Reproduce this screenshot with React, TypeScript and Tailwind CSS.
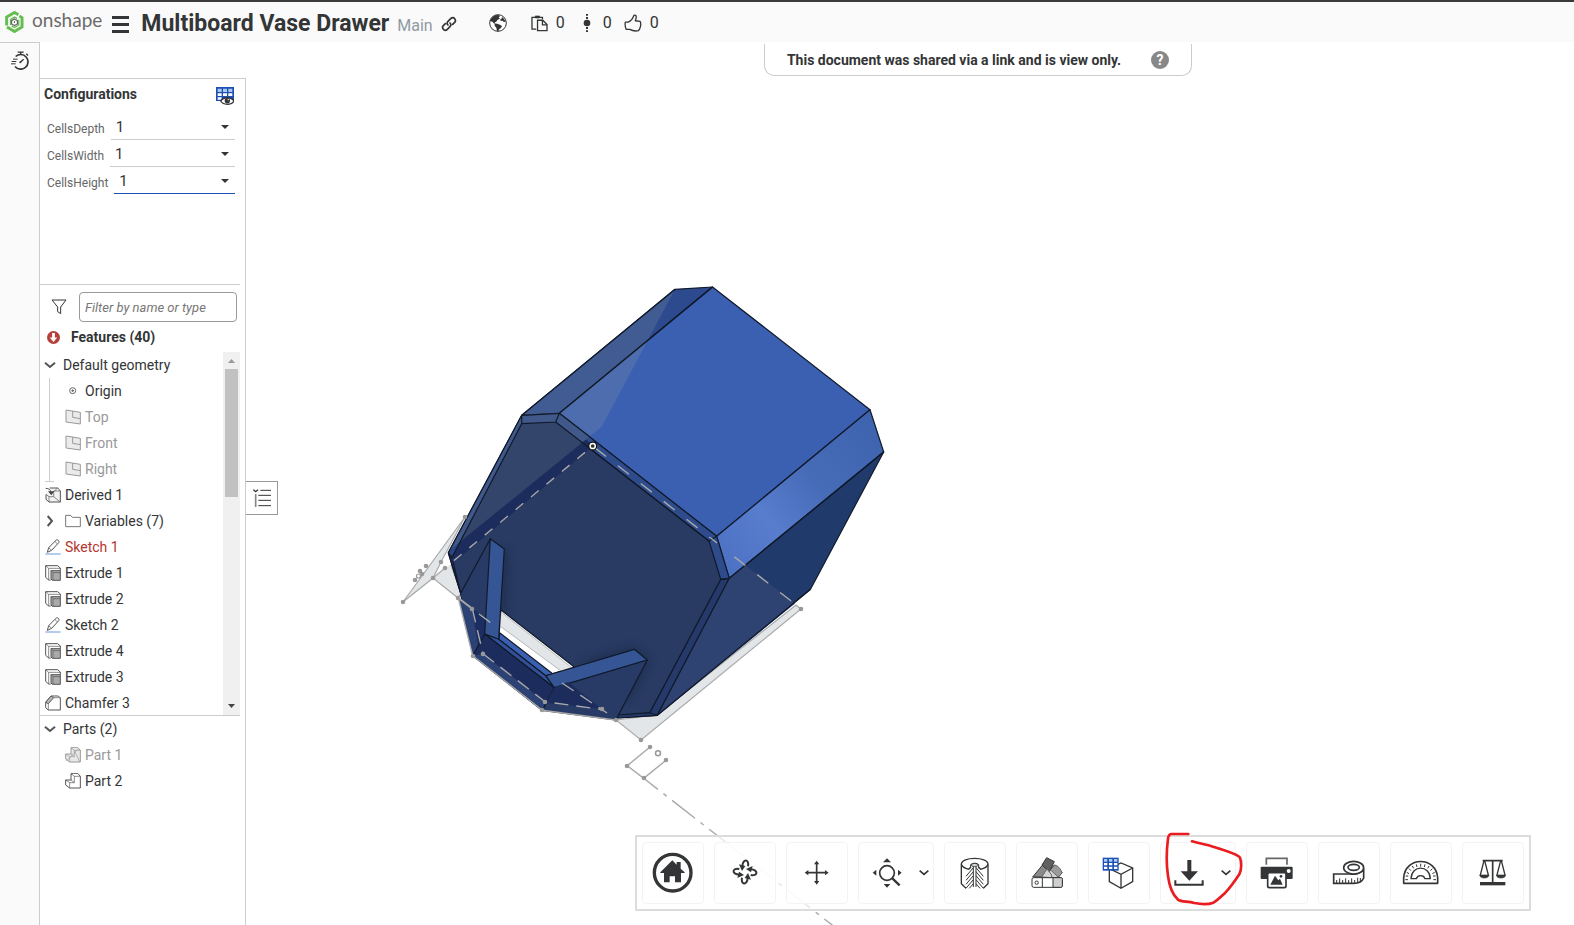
import { useState } from "react";
import type { ReactNode } from "react";

type IconProps = { className?: string };

const INK = "#333536";

function OnshapeMark() {
  return (
    <svg viewBox="0 0 58 66" className="h-[22px] w-[19px]" fill="none">
      <path d="M5 44V18L29 4l12 7" stroke="#63bd4f" strokeWidth="9" />
      <path d="M44 15l8 5v28L29 62 6 48" stroke="#63bd4f" strokeWidth="9" />
      <path d="M17 42V25l12-7 8 4" stroke="#63bd4f" strokeWidth="4" />
      <path d="M42 26v16l-13 8-9-5" stroke="#63bd4f" strokeWidth="4" />
      <path d="M29 24l9 5v10l-9 5-9-5V29z" stroke="#666" strokeWidth="4" />
      <path d="M29 30v6" stroke="#666" strokeWidth="3" />
    </svg>
  );
}

function LinkIcon() {
  return (
    <svg viewBox="0 0 48 48" className="size-4" fill="none" stroke={INK} strokeWidth="5" strokeLinecap="round">
      <path d="M21 27c-4-4-3-8 0-11l8-8c4-4 9-4 12 0s3 8 0 11l-6 6" />
      <path d="M27 21c4 4 3 8 0 11l-8 8c-4 4-9 4-12 0s-3-8 0-11l6-6" />
    </svg>
  );
}

function GlobeIcon() {
  return (
    <svg viewBox="0 0 54 54" className="size-[18px]">
      <circle cx="27" cy="27" r="25" fill="#fff" stroke={INK} strokeWidth="3" />
      <path d="M4 18C9 8 19 2 29 3l4 4-4 3 4 4-7 3-5 7-4 1 2 4-5-1-4-5-7-2zM17 28l7 1 9 3 6 4-3 6-5 3-3 7-4-1-2-10-5-6zM38 8l7 6 5 9-5 1-5-4-5 1-1-5 5-3z" fill={INK} />
    </svg>
  );
}

function CopyIcon() {
  return (
    <svg viewBox="0 0 52 50" className="h-[17px] w-[17px]" fill="none" stroke={INK} strokeWidth="4">
      <path d="M16 42H3V6h32v6" />
      <path d="M13 2h13v6H13z" fill={INK} strokeWidth="2" />
      <path d="M20 15h16l13 13v19H20z" fill="#fafafa" />
      <path d="M35 15v14h14" />
    </svg>
  );
}

function VersionIcon() {
  return (
    <svg viewBox="0 0 24 54" className="h-[18px] w-2" fill={INK}>
      <circle cx="12" cy="27" r="10" />
      <path d="M9 0h6v5H9zM9 9h6v6H9zM9 39h6v6H9zM9 49h6v5H9z" />
    </svg>
  );
}

function ThumbIcon() {
  return (
    <svg viewBox="0 0 54 56" className="size-[18px]" fill="none" stroke={INK} strokeWidth="4" strokeLinejoin="round">
      <path d="M3 25h9c9-3 14-9 18-21 8-2 9 6 4 17l15 2c4 6 2 22-5 29-10 2-20 0-27-4H6c-4-7-4-16-3-23z" />
    </svg>
  );
}

function StopwatchIcon() {
  return (
    <svg viewBox="0 0 54 56" className="h-[19px] w-[18px]" fill="none" stroke={INK} strokeWidth="4">
      <path d="M14 16A22 22 0 1 1 12 46" strokeWidth="5" />
      <path d="M20 3h18M29 3v7M46 8l5 5" />
      <path d="M6 24h14M2 31h14M0 38h14" strokeWidth="3" />
      <path d="M28 33l10-9" />
      <circle cx="28" cy="33" r="3" fill={INK} stroke="none" />
    </svg>
  );
}

function ConfigTableIcon() {
  return (
    <svg viewBox="0 0 54 54" className="size-[18px]">
      <path d="M0 0h54v42H0z" fill="#1c50b3" />
      <path d="M5 5h12v10H5zM21 5h12v10H21zM37 5h12v10H37z" fill="#a9c8f2" />
      <path d="M5 19h12v8H5zM21 19h12v8H21zM37 19h12v8H37zM5 31h12v7H5z" fill="#fff" />
      <path d="M14 42c8-13 32-13 40 0-8 13-32 13-40 0z" fill="#fff" stroke={INK} strokeWidth="4" />
      <circle cx="34" cy="41" r="8" fill={INK} />
      <circle cx="37" cy="38" r="2" fill="#fff" />
    </svg>
  );
}

function FilterIcon() {
  return (
    <svg viewBox="0 0 46 48" className="size-4" fill="none" stroke={INK} strokeWidth="3" strokeLinejoin="round">
      <path d="M2 3h42L28 24v20l-9-6V24z" />
    </svg>
  );
}

function ErrorIcon() {
  return (
    <svg viewBox="0 0 38 38" className="size-[13px]">
      <circle cx="19" cy="19" r="19" fill="#b5403a" />
      <path d="M15 6h8v13h7L19 32 8 19h7z" fill="#fff" />
    </svg>
  );
}

function Chevron({ className }: IconProps) {
  return (
    <svg viewBox="0 0 36 24" className={className} fill="none" stroke="#555" strokeWidth="6">
      <path d="M3 5l15 13L33 5" />
    </svg>
  );
}

function OriginIcon() {
  return (
    <svg viewBox="0 0 48 48" className="size-4" fill="none" stroke="#666" strokeWidth="3">
      <circle cx="23" cy="23" r="9" />
      <path d="M19 23h8M23 19v8" />
    </svg>
  );
}

function PlaneIcon() {
  return (
    <svg viewBox="0 0 48 48" className="size-4" fill="#ebebeb" stroke="#999" strokeWidth="3">
      <path d="M3 3l43 7v35L3 39z" />
      <path d="M23 6v19l23 4" fill="none" />
    </svg>
  );
}

function DerivedIcon() {
  return (
    <svg viewBox="0 0 48 48" className="size-4" fill="none" stroke="#555" strokeWidth="3">
      <path d="M14 3h24l8 8v34H12l-9-8V22" fill="#f2f2f2" />
      <path d="M3 22l9 7v16M12 29h14V12h20M38 3L28 12" strokeWidth="2" />
      <path d="M26 29l20 16" strokeWidth="2" />
      <path d="M2 4c10 0 15 5 16 12" />
      <path d="M9 13h19L19 25z" fill="#444" stroke="none" />
    </svg>
  );
}

function FolderIcon() {
  return (
    <svg viewBox="0 0 48 48" className="size-4" fill="none" stroke="#777" strokeWidth="3" strokeLinejoin="round">
      <path d="M2 7h15l5 6h24v28H2z" />
    </svg>
  );
}

function SketchIcon() {
  return (
    <svg viewBox="0 0 48 48" className="size-4" fill="none" stroke="#555" strokeWidth="3" strokeLinejoin="round">
      <path d="M7 40l4-14L34 3c4-2 9 2 8 7L20 34z" />
      <path d="M11 26l9 8M30 8l8 7" strokeWidth="2" />
      <path d="M1 45h46" stroke="#6d98dc" />
    </svg>
  );
}

function ExtrudeIcon() {
  return (
    <svg viewBox="0 0 48 48" className="size-4" fill="none" stroke="#555" strokeWidth="3">
      <path d="M17 45h-6l-9-8V2h36l8 7v8" fill="#fff" />
      <path d="M2 2l9 8v35M11 10h35" strokeWidth="2" />
      <path d="M18 17h28v29H22l-4-4z" fill="#aaa" />
      <path d="M18 17l6 6v22M24 23h22" strokeWidth="2" />
    </svg>
  );
}

function ChamferIcon() {
  return (
    <svg viewBox="0 0 48 48" className="size-4" fill="none" stroke="#555" strokeWidth="3">
      <path d="M2 22L18 3h22l6 6v36H10l-8-7z" fill="#fff" />
      <path d="M2 22L18 3l8 5-16 18z" fill="#bbb" />
      <path d="M10 26v19M26 8h20" strokeWidth="2" />
    </svg>
  );
}

function PartIcon({ hidden }: { hidden?: boolean }) {
  return (
    <svg viewBox="0 0 48 48" className="size-4" fill={hidden ? "#e8e8e8" : "#fff"} stroke={hidden ? "#999" : "#555"} strokeWidth="3">
      <path d="M2 21h16V2l8-1h12l8 9v35H14L2 36z" />
      <path d="M2 21l12 8v16M14 29h14V10h18M18 21l10 8M18 2l10 8" fill="none" strokeWidth="2" />
      {hidden && <path d="M4 42L40 6M28 10l16 34" strokeWidth="2" />}
    </svg>
  );
}

function FeatureListIcon() {
  return (
    <svg viewBox="0 0 54 54" className="size-[18px]" fill="none" stroke={INK} strokeWidth="3">
      <path d="M1 2l7 6 7-6" strokeWidth="4" />
      <path d="M8 15v39" stroke="#888" strokeWidth="5" />
      <path d="M22 4h32M16 19h38M16 34h38M16 50h38" />
    </svg>
  );
}

function HomeIcon() {
  return (
    <svg viewBox="70 70 180 180" className="size-[60px]">
      <circle cx="159" cy="159" r="55" fill="none" stroke={INK} strokeWidth="10" />
      <path d="M122 158l36-36 13 13v-8h12v20l12 11v2h-11v28h-18v-18h-16v18h-17v-28h-11z" fill={INK} />
    </svg>
  );
}

function RotateIcon() {
  return (
    <svg viewBox="286 70 180 180" className="size-[60px]" fill="none" stroke={INK} strokeWidth="6">
      {[0, 90, 180, 270].map((a) => (
        <g key={a} transform={`rotate(${a} 376 157)`}>
          <path d="M385 140c5-21-16-25-17 0" />
          <path d="M358 134l19 5-10 15z" fill={INK} stroke="none" />
        </g>
      ))}
    </svg>
  );
}

function PanIcon() {
  return (
    <svg viewBox="502 70 180 180" className="size-[60px]">
      <path d="M591 132v54M564 159h54" stroke={INK} strokeWidth="5" />
      <path d="M591 123l8 11h-16zM591 195l8-11h-16zM555 159l11-8v16zM627 159l-11-8v16z" fill={INK} />
    </svg>
  );
}

function ZoomFitIcon() {
  return (
    <svg viewBox="718 70 180 180" className="size-[60px]">
      <circle cx="802" cy="160" r="22" fill="none" stroke={INK} strokeWidth="5" />
      <path d="M818 176l22 21" stroke={INK} strokeWidth="7" />
      <path d="M802 116l12 12h-24zM802 204l10-11h-20zM759 159l11-9v18zM846 159l-11-9v18z" fill={INK} />
    </svg>
  );
}

function SectionIcon() {
  return (
    <svg viewBox="976 70 180 180" className="size-[60px]" fill="none" stroke={INK} strokeWidth="4">
      <path d="M1025 134v58l14 14M1105 134v58l-14 14" />
      <path d="M1025 134c3 9 12 13 22 15l6-6M1105 134c-3 9-12 13-22 15l-6-6" />
      <path d="M1025 134c0-24 80-24 80 0" />
      <path d="M1053 146v-10c4-7 20-7 24 0v10" strokeWidth="3" />
      <ellipse cx="1065" cy="136" rx="12" ry="4" strokeWidth="3" />
      <path d="M1061 140v62M1069 140v62" strokeWidth="3" />
      <path
        d="M1039 206l22-26M1039 194l22-26M1039 182l22-26M1039 170l22-26M1049 206l12-14M1091 206l-22-26M1091 194l-22-26M1091 182l-22-26M1091 170l-22-26M1081 206l-12-14"
        strokeWidth="3"
      />
    </svg>
  );
}

function AppearanceIcon() {
  return (
    <svg viewBox="1192 70 180 180" className="size-[60px]" stroke={INK} strokeWidth="3" strokeLinejoin="round">
      <path d="M1262 172l42-36 24 22-12 16z" fill="#d5d5d5" stroke="#666" />
      <path d="M1292 150l14-14c10 3 18 12 21 24l-12 12z" fill="#9b9b9b" stroke="#666" />
      <path d="M1239 172l33-40 20 15-26 25z" fill="#8a8a8a" />
      <path d="M1267 136l14-22 23 12-15 30z" fill="#616161" />
      <path d="M1266 172l16-24 14 18v8z" fill="#d5d5d5" stroke="#666" />
      <rect x="1237" y="174" width="91" height="29" rx="5" fill="#fff" />
      <path d="M1300 174h24c3 0 4 2 4 5v19c0 3-2 5-5 5h-23z" fill="#cfcfcf" />
      <path d="M1268 174v29" />
      <circle cx="1251" cy="189" r="5" fill="#fff" />
    </svg>
  );
}

function ConfigCubeIcon() {
  return (
    <svg viewBox="58 70 180 180" className="size-[60px]">
      <path d="M119 147l35-17 35 15v41l-35 20-35-20zM119 147l35 17 35-19M154 164v42" fill="#fff" stroke={INK} strokeWidth="4" />
      <path d="M99 114h48v39H99z" fill="#1c50b3" />
      <path d="M103 118h10v8h-10zM118 118h10v8h-10zM133 118h10v8h-10z" fill="#a9c8f2" />
      <path d="M103 130h10v7h-10zM118 130h10v7h-10zM133 130h10v7h-10zM103 141h10v7h-10zM118 141h10v7h-10zM133 141h10v7h-10z" fill="#fff" />
    </svg>
  );
}

function DownloadIcon() {
  return (
    <svg viewBox="274 70 180 180" className="size-[60px]">
      <path d="M353 121h12v34h20l-26 28-26-28h20z" fill={INK} />
      <path d="M317 182v13h82v-13" fill="none" stroke={INK} strokeWidth="6" />
    </svg>
  );
}

function PrintIcon() {
  return (
    <svg viewBox="532 70 180 180" className="size-[60px]">
      <path d="M590 135v-19h62v19" fill="none" stroke="#666" strokeWidth="5" />
      <path d="M573 144c0-2 2-3 4-3h88c2 0 4 1 4 3v31c0 2-2 3-4 3h-88c-2 0-4-1-4-3z" fill={INK} />
      <circle cx="657" cy="154" r="6" fill="#fff" />
      <rect x="594" y="159" width="55" height="45" rx="5" fill="#fff" stroke={INK} strokeWidth="5" />
      <path d="M602 195l14-27 10 14 5-5 8 18z" fill={INK} />
      <circle cx="634" cy="170" r="4" fill={INK} />
    </svg>
  );
}

function TapeIcon() {
  return (
    <svg viewBox="748 70 180 180" className="size-[60px]" fill="none" stroke={INK} strokeWidth="5">
      <path d="M792 163h50c8 2 34 0 40-16v28c-4 10-14 16-30 16h-60z" fill="#fff" />
      <ellipse cx="852" cy="144" rx="30" ry="19" fill="#fff" />
      <ellipse cx="852" cy="143" rx="17" ry="9" />
      <path d="M801 190v-9M810 190v-14M819 190v-9M828 190v-14M837 190v-9M846 190v-14M855 190v-9M864 188v-14M872 184v-9" strokeWidth="3" />
    </svg>
  );
}

function ProtractorIcon() {
  return (
    <svg viewBox="964 70 180 180" className="size-[60px]" fill="none" stroke={INK} strokeWidth="5" strokeLinejoin="round">
      <path d="M1002 191v-16c4-66 98-66 102 0v16z" />
      <path d="M1024 177c2-42 56-42 58 0h-16c-4-12-22-12-26 0z" strokeWidth="4" />
      <path
        d="M1007 180h8M1008 169h8M1011 158l7 4M1018 147l6 6M1028 139l4 7M1040 134l2 8M1053 132v9M1066 134l-2 8M1078 139l-4 7M1088 147l-6 6M1095 158l-7 4M1098 169h-8M1099 180h-8"
        strokeWidth="3"
      />
    </svg>
  );
}

function BalanceIcon() {
  return (
    <svg viewBox="1180 70 180 180" className="size-[60px]" fill="none" stroke={INK} strokeWidth="4">
      <path d="M1239 123h60M1269 121v66" strokeWidth="5" />
      <path d="M1243 123l-11 43M1245 123l11 43M1293 123l-11 43M1295 123l11 43" />
      <path d="M1230 166h28c0 12-28 12-28 0zM1280 166h28c0 12-28 12-28 0z" fill={INK} strokeWidth="2" />
      <path d="M1231 187h76v10h-76z" fill={INK} stroke="none" />
    </svg>
  );
}

function ToolButton({ label, menu, children }: { label: string; menu?: boolean; children: ReactNode }) {
  return (
    <button
      aria-label={label}
      className={`relative flex h-[62px] shrink-0 items-center rounded border border-[#f3f3f3] bg-white/80 ${
        menu ? "w-[76px]" : "w-[62px]"
      }`}
    >
      {children}
      {menu && (
        <svg viewBox="0 0 30 20" className="h-2 w-[10px] shrink-0" fill="none" stroke={INK} strokeWidth="5">
          <path d="M2 3l13 11L28 3" />
        </svg>
      )}
    </button>
  );
}

function Toolbar() {
  return (
    <div className="absolute right-[43px] bottom-[14px] flex gap-[10px] border-2 border-[#dcdcdc] bg-white/70 p-[5px]">
      <ToolButton label="Home view"><HomeIcon /></ToolButton>
      <ToolButton label="Rotate"><RotateIcon /></ToolButton>
      <ToolButton label="Pan"><PanIcon /></ToolButton>
      <ToolButton label="Zoom to fit" menu><ZoomFitIcon /></ToolButton>
      <ToolButton label="Section view"><SectionIcon /></ToolButton>
      <ToolButton label="Appearances"><AppearanceIcon /></ToolButton>
      <ToolButton label="Configurations"><ConfigCubeIcon /></ToolButton>
      <ToolButton label="Export" menu>
        <DownloadIcon />
        <svg viewBox="285 30 240 234" className="pointer-events-none absolute -top-[13px] left-1 z-10 h-[78px] w-20" fill="none" stroke="#ea1c1f" strokeWidth="8" strokeLinecap="round" strokeLinejoin="round">
          <path d="M355 42h-50c-8 0-10 6-11 14-5 40-4 86 0 112 4 30 14 56 29 70 12 9 28 5 50 11 20 4 44 4 57-1 14-8 24-19 36-30 16-16 28-34 42-55 7-12 7-38 2-50-6-10-48-23-78-32-22-8-46-11-66-17" />
        </svg>
      </ToolButton>
      <ToolButton label="Print"><PrintIcon /></ToolButton>
      <ToolButton label="Measure"><TapeIcon /></ToolButton>
      <ToolButton label="Measure angle"><ProtractorIcon /></ToolButton>
      <ToolButton label="Mass properties"><BalanceIcon /></ToolButton>
    </div>
  );
}

const sketchPoints = [
  [465, 517], [403, 602], [433, 578], [441, 562], [445, 568], [426, 566], [420, 571], [422, 574], [415, 580],
  [458, 598], [472, 609], [473, 656], [483, 654], [542, 710], [545, 702], [602, 709], [616, 720],
  [801, 609], [641, 740], [650, 747], [666, 760], [627, 766], [644, 778],
];

function Model() {
  return (
    <svg viewBox="246 42 1328 883" preserveAspectRatio="xMidYMid meet" className="absolute inset-0 h-full w-full">
      <defs>
        <linearGradient id="chamfer" x1="720" y1="560" x2="880" y2="430" gradientUnits="userSpaceOnUse">
          <stop offset="0" stopColor="#4d72c4" />
          <stop offset="0.3" stopColor="#587dcd" />
          <stop offset="0.6" stopColor="#466bb7" />
          <stop offset="1" stopColor="#3e64b0" />
        </linearGradient>
        <filter id="soft" x="-50%" y="-50%" width="200%" height="200%">
          <feGaussianBlur stdDeviation="5" />
        </filter>
      </defs>

      {/* sketch regions behind the part */}
      <g fill="#e2e6e8" stroke="#aaa" strokeWidth="1.2">
        <path d="M465 517L403 602L433 578L441 562Z" />
        <path d="M433 578L445 568L450 562L461 593L458 598Z" />
        <path d="M616 720L657 715L796 605L801 609L641 740Z" />
      </g>
      <path d="M448.3 553L441 562L445 568L452 564Z" fill="#fff" />

      <g stroke="#111a2b" strokeWidth="1.2" strokeLinejoin="round">
        <path d="M675 289.3L712.5 287L559.3 413.3L521.7 415.3Z" fill="#2c4a8d" />
        <path d="M712.5 287L870 409.7L716.7 536.3L559.3 413.3Z" fill="#3b60b1" />
        <path d="M870 409.7L883.7 452L729.3 578.3L716.7 536.3Z" fill="url(#chamfer)" />
        <path d="M883.7 452L810.5 589.3L657.3 715.3L729.3 578.3Z" fill="#213a6c" />
        {/* rim */}
        <path d="M521.7 415.3L559.3 413.3L716.7 536.3L729.3 578.3L657.3 715.3L617.3 718L542 710L473 655L460.7 593.3L448.3 552.7Z" fill="#2e4c8c" />
        <path d="M729.3 578.3L657.3 715.3L617.3 718L618 714L649.7 712.7L720.7 579.3Z" fill="#25396b" />
        <path d="M521.7 423.7L555.7 422L709 541L720.7 579.3L649.7 712.7L618 715L542 710L473 655L460.7 593.3L452 557.3Z" fill="#293b63" />
        <path d="M521.7 415.3V423.7M559.3 413.3L555.7 422M716.7 536.3L709 541M729.3 578.3L720.7 579.3M657.3 715.3L649.7 712.7" fill="none" />
      </g>
      <path d="M729.3 578.3L745.3 565.2L795 603.5L657.3 715.3Z" fill="#2f4372" />
      <path d="M883.7 452L729.3 578.3L657.3 715.3L810.5 589.3" fill="none" stroke="#111a2b" strokeWidth="1.2" />

      {/* shaded band between the sketch plane and the front face */}
      <path d="M559.3 413.3L593 446L452 564L448.3 552.7L521.7 415.3Z" fill="#1c2d5d" />
      <path d="M521.7 415.3L559.3 413.3L590 437L582 442L555.7 422L521.7 423.7L452 557.3L448.3 552.7Z" fill="#2b4783" />
      <path d="M675 289.3L649 338L601.7 426.7L583 442L450 550L448.3 552.7L521.7 415.3Z" fill="#94a5a8" fillOpacity="0.2" />
      <path d="M675 289.3L521.7 415.3L448.3 552.7M712.5 287L559.3 413.3L590 437M521.7 415.3L559.3 413.3L555.7 422L521.7 423.7L452 557.3L448.3 552.7M521.7 415.3V423.7M555.7 422L709 541" fill="none" stroke="#111a2b" strokeWidth="1.2" />

      {/* pull handle */}
      <g filter="url(#soft)" fill="#16213e" opacity="0.5">
        <path d="M496 548L508 552L506 610L498 635Z" />
        <path d="M580 662L634 646L650 660L630 700Z" />
      </g>
      <path d="M460.7 593.3L490.3 538.7L484.7 634L473 655.7Z" fill="#283b66" />
      <path d="M458.3 598L472.3 608.7L483 654L472.7 655.7Z" fill="#2c4274" />
      <path d="M472 608L486 619L484.7 634L478 646Z" fill="#1c2e61" />
      <g stroke="#111a2b" strokeWidth="1.2" strokeLinejoin="round">
        <path d="M501 610L574.3 667L545.7 675.7L498.7 639.3Z" fill="#fff" />
        <path d="M501 612L571.5 667.5L561 671L500 626Z" fill="#e2e6e8" stroke="#aaa" strokeWidth="0.8" />
        <path d="M500 633L553 674L545.7 675.7L498.7 639.3Z" fill="#3b60b1" />
        <path d="M490.3 538.7L504.3 549L498.7 639.3L484.7 634Z" fill="#365594" />
        <path d="M484.7 634L498.7 639.3L545.7 675.7L554.3 687.7Z" fill="#31519a" />
        <path d="M545.7 675.7L634.3 649.3L647.3 660L554.3 687.7Z" fill="#365594" />
        <path d="M554.3 687.7L647.3 660L617.3 717.3L615.7 720L542.3 710.3Z" fill="#283b66" />
        <path d="M484.7 634L554.3 687.7L542.3 710.3L472.7 655.7Z" fill="#1c2d5d" />
        <path d="M448.3 552.7L460.7 593.3L490.3 538.7" fill="none" />
      </g>
      <path d="M483 654L545 701.7L542.3 710.3L472.7 655.7Z" fill="#2c4274" />
      <path d="M554.3 687.7L568 682L602 709L546 703Z" fill="#1c2d5d" />

      {/* sketch lines */}
      <g fill="none" stroke="#a8a8a8" strokeWidth="1.4">
        <path d="M458.3 598L472.7 655.7L542.3 710.3L615.7 720" />
        <path d="M458.3 598L472.3 608.7" strokeWidth="2" />
        <path d="M592.7 446L445 568" strokeDasharray="10 10" strokeDashoffset="-10" />
        <path d="M592.7 446L717 543M732 555L801 608.7" strokeDasharray="14 15" strokeDashoffset="-3" />
        <path d="M479 614L491 623M562 683L607 713" strokeDasharray="14 8" />
        <path d="M472.3 608.7L483 653.7M483 653.7L545 701.7L602 709.5" strokeDasharray="14 8" />
        <path d="M650 747L627.3 765.7L643.7 778.3L666.3 760" />
        <path d="M643.7 778.3L836 928" strokeDasharray="18 7 4 7 29 7 4 7 45 7 4 7" />
      </g>
      <g fill="#999">
        {sketchPoints.map(([x, y]) => (
          <circle key={`${x}-${y}`} cx={x} cy={y} r="2.3" />
        ))}
      </g>
      <circle cx="658" cy="753.3" r="2.5" fill="#fff" stroke="#999" strokeWidth="1.5" />
      <circle cx="418.5" cy="576" r="2" fill="#fff" stroke="#999" strokeWidth="1.2" />
      <circle cx="592.7" cy="446" r="4.5" fill="#111" />
      <circle cx="592.7" cy="446" r="2.6" fill="#333" stroke="#fff" strokeWidth="1.5" />
    </svg>
  );
}

function Header() {
  return (
    <header className="flex h-[42px] shrink-0 items-center border-t-2 border-[#3a3a3a] bg-[#fafafa] pl-[5px] text-base text-[#333536]">
      <a href="#" className="flex items-center gap-2">
        <OnshapeMark />
        <span className="pb-1 font-['Lato',sans-serif] text-[19px] leading-6 text-[#6b6b6b]">onshape</span>
      </a>
      <button aria-label="Main menu" className="ml-[10px] flex w-[17px] flex-col gap-1 pt-1">
        <span className="h-[3px] bg-[#333536]" />
        <span className="h-[3px] bg-[#333536]" />
        <span className="h-[3px] bg-[#333536]" />
      </button>
      <h1 className="ml-3 pt-1 text-[23px] leading-7 font-bold">Multiboard Vase Drawer</h1>
      <span className="ml-2 pt-2 text-[#8f9ba3]">Main</span>
      <button aria-label="Copy link" className="ml-2 pt-1"><LinkIcon /></button>
      <div className="ml-8 flex items-center pt-[2px]">
        <GlobeIcon />
        <span className="ml-6 flex items-center gap-2"><CopyIcon />0</span>
        <span className="ml-[18px] flex items-center gap-3"><VersionIcon />0</span>
        <span className="ml-3 flex items-center gap-2"><ThumbIcon />0</span>
      </div>
    </header>
  );
}

const configRows = [
  { name: "CellsDepth", active: false },
  { name: "CellsWidth", active: false },
  { name: "CellsHeight", active: true },
];

function Configurations() {
  return (
    <section className="mr-[5px] h-[206px] shrink-0 border-b border-[#ccc] pr-[5px]">
      <div className="flex h-[34px] items-center justify-between pl-1">
        <h2 className="pb-1 text-sm font-bold">Configurations</h2>
        <button aria-label="Configuration visibility" className="pr-px"><ConfigTableIcon /></button>
      </div>
      {configRows.map(({ name, active }) => (
        <div key={name} className="flex h-[27px] pl-[7px]">
          <label htmlFor={name} className="pt-[7px] text-xs leading-[18px] text-[#666]">{name}</label>
          <div className="relative ml-[6px] flex-1">
            <select
              id={name}
              defaultValue="1"
              className={`h-full w-full appearance-none border-b bg-transparent pt-1 pl-[5px] text-[15px] outline-none ${
                active ? "border-[#1c50b3]" : "border-[#ccc]"
              }`}
            >
              <option>1</option>
              <option>2</option>
              <option>3</option>
            </select>
            <svg viewBox="0 0 8 4" className="pointer-events-none absolute top-3 right-[6px] h-1 w-2" fill={INK}>
              <path d="M0 0h8L4 4z" />
            </svg>
          </div>
        </div>
      ))}
    </section>
  );
}

type Feature = { name: string; icon: ReactNode; error?: boolean };

const planes = ["Top", "Front", "Right"];

const features: Feature[] = [
  { name: "Sketch 1", icon: <SketchIcon />, error: true },
  { name: "Extrude 1", icon: <ExtrudeIcon /> },
  { name: "Extrude 2", icon: <ExtrudeIcon /> },
  { name: "Sketch 2", icon: <SketchIcon /> },
  { name: "Extrude 4", icon: <ExtrudeIcon /> },
  { name: "Extrude 3", icon: <ExtrudeIcon /> },
  { name: "Chamfer 3", icon: <ChamferIcon /> },
];

const row = "flex h-[26px] items-center";

function FeatureTree() {
  return (
    <div className="mr-[5px] flex h-[364px] shrink-0 overflow-hidden border-b border-[#ccc]">
      <ul className="flex-1">
        <li>
          <div className={`${row} gap-[7px] pl-1`}>
            <Chevron className="h-2 w-3" />
            Default geometry
          </div>
          <ul className="relative ml-[9px] border-l border-[#ccc]">
            <li className={`${row} gap-1 pl-[15px]`}><OriginIcon />Origin</li>
            {planes.map((name) => (
              <li key={name} className={`${row} gap-1 pl-[15px] text-[#999]`}><PlaneIcon />{name}</li>
            ))}
            <li aria-hidden className="absolute bottom-0 -left-[5px] h-px w-[9px] bg-[#ccc]" />
          </ul>
        </li>
        <li className={`${row} gap-1 pl-[5px]`}><DerivedIcon />Derived 1</li>
        <li className={`${row} pl-1`}>
          <Chevron className="h-2 w-3 -rotate-90" />
          <span className="ml-[9px] flex items-center gap-1"><FolderIcon />Variables (7)</span>
        </li>
        {features.map(({ name, icon, error }) => (
          <li key={name} className={`${row} gap-1 pl-[5px] ${error ? "text-[#b5352e]" : ""}`}>{icon}{name}</li>
        ))}
      </ul>
      <div className="flex w-[17px] flex-col items-center bg-[#f0f0f0]">
        <svg viewBox="0 0 17 17" className="size-[17px]" fill="#999"><path d="M5 11h7L8.5 7z" /></svg>
        <div className="h-32 w-[13px] bg-[#c1c1c1]" />
        <svg viewBox="0 0 17 17" className="mt-auto size-[17px]" fill="#444"><path d="M5 6h7l-3.5 4z" /></svg>
      </div>
    </div>
  );
}

function Sidebar() {
  const [filter, setFilter] = useState("");

  return (
    <aside className="mt-9 flex w-[206px] shrink-0 flex-col border-t border-r border-[#ccc] bg-white">
      <Configurations />
      <div className="flex items-center gap-3 pt-[7px] pr-2 pl-[11px]">
        <FilterIcon />
        <input
          aria-label="Filter features"
          value={filter}
          onChange={(e) => setFilter(e.target.value)}
          placeholder="Filter by name or type"
          className="h-[30px] min-w-0 flex-1 rounded border border-[#999] px-[5px] text-[13px] italic placeholder:text-[#777]"
        />
      </div>
      <h2 className="flex h-[30px] shrink-0 items-center gap-[11px] pl-[7px] font-bold">
        <ErrorIcon />
        Features (40)
      </h2>
      <FeatureTree />
      <div className={`${row} gap-[7px] pl-1`}>
        <Chevron className="h-2 w-3" />
        Parts (2)
      </div>
      <ul>
        <li className={`${row} gap-1 pl-[25px] text-[#999]`}><PartIcon hidden />Part 1</li>
        <li className={`${row} gap-1 pl-[25px]`}><PartIcon />Part 2</li>
      </ul>
    </aside>
  );
}

export default function App() {
  return (
    <div className="flex min-h-screen flex-col bg-white font-['Roboto',sans-serif] text-sm text-[#333536]">
      <Header />
      <div className="flex flex-1">
        <nav className="flex w-10 shrink-0 flex-col items-center border-t border-r border-[#ccc] bg-[#fafafa] pt-2">
          <button aria-label="Performance"><StopwatchIcon /></button>
        </nav>
        <Sidebar />
        <main className="relative flex-1 overflow-hidden">
          <Model />
          <div className="absolute top-[2px] left-[39%] flex h-8 items-center gap-[30px] rounded-b-[10px] border border-t-0 border-[#ccc] bg-white px-[22px] font-bold">
            This document was shared via a link and is view only.
            <button aria-label="Help" className="flex size-[18px] items-center justify-center rounded-full bg-[#888] text-sm text-white">?</button>
          </div>
          <button aria-label="Feature list" className="absolute top-[439px] left-0 flex h-[34px] w-8 items-center justify-center border border-l-0 border-[#999] bg-white">
            <FeatureListIcon />
          </button>
          <Toolbar />
        </main>
      </div>
    </div>
  );
}
